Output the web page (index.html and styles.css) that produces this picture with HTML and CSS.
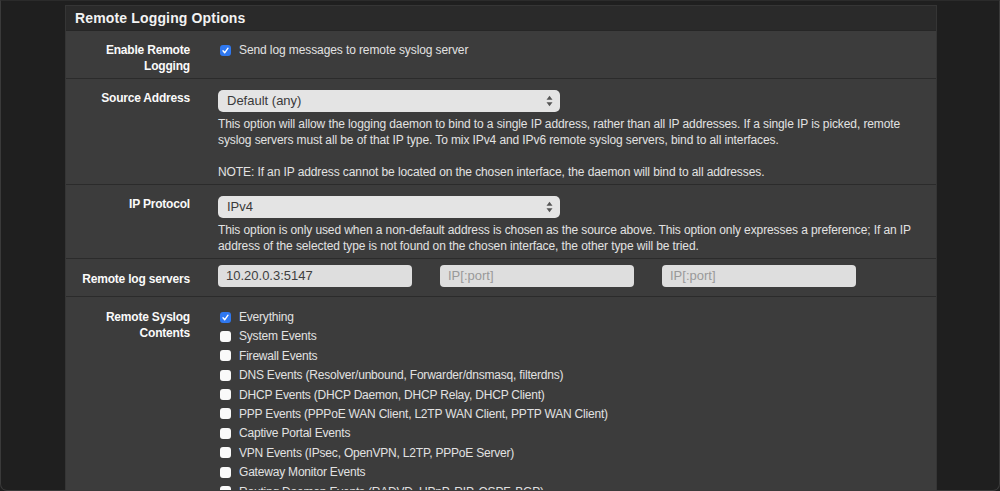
FILE: index.html
```html
<!DOCTYPE html>
<html>
<head>
<meta charset="utf-8">
<link rel="stylesheet" href="styles.css">
</head>
<body>
<div class="window">
  <div class="panel">
    <div class="panel-heading">Remote Logging Options</div>
    <div class="panel-body">
      <div class="row">
        <div class="label">Enable Remote Logging</div>
        <div class="content">
          <div class="check-item"><span class="cb checked"><svg viewBox="0 0 11 11" width="11" height="11"><path d="M3 5.8 L4.7 7.8 L8 3.2" fill="none" stroke="#fff" stroke-width="1.4" stroke-linecap="round" stroke-linejoin="round"/></svg></span><span>Send log messages to remote syslog server</span></div>
        </div>
      </div>
      <div class="row">
        <div class="label">Source Address</div>
        <div class="content">
          <div class="select"><span>Default (any)</span><svg class="arrows" viewBox="0 0 7 12" width="7" height="12"><path d="M0.5 4.8 L3.5 0.8 L6.5 4.8 Z M0.5 7.2 L3.5 11.2 L6.5 7.2 Z" fill="#555"/></svg></div>
          <div class="help">This option will allow the logging daemon to bind to a single IP address, rather than all IP addresses. If a single IP is picked, remote syslog servers must all be of that IP type. To mix IPv4 and IPv6 remote syslog servers, bind to all interfaces.<br><br>NOTE: If an IP address cannot be located on the chosen interface, the daemon will bind to all addresses.</div>
        </div>
      </div>
      <div class="row">
        <div class="label">IP Protocol</div>
        <div class="content">
          <div class="select"><span>IPv4</span><svg class="arrows" viewBox="0 0 7 12" width="7" height="12"><path d="M0.5 4.8 L3.5 0.8 L6.5 4.8 Z M0.5 7.2 L3.5 11.2 L6.5 7.2 Z" fill="#555"/></svg></div>
          <div class="help">This option is only used when a non-default address is chosen as the source above. This option only expresses a preference; If an IP address of the selected type is not found on the chosen interface, the other type will be tried.</div>
        </div>
      </div>
      <div class="row row-servers">
        <div class="label">Remote log servers</div>
        <div class="content inputs">
          <div class="input">10.20.0.3:5147</div>
          <div class="input placeholder">IP[:port]</div>
          <div class="input placeholder">IP[:port]</div>
        </div>
      </div>
      <div class="row row-contents">
        <div class="label">Remote Syslog Contents</div>
        <div class="content list">
          <div class="check-item"><span class="cb checked"><svg viewBox="0 0 11 11" width="11" height="11"><path d="M3 5.8 L4.7 7.8 L8 3.2" fill="none" stroke="#fff" stroke-width="1.4" stroke-linecap="round" stroke-linejoin="round"/></svg></span><span>Everything</span></div>
          <div class="check-item"><span class="cb"></span><span>System Events</span></div>
          <div class="check-item"><span class="cb"></span><span>Firewall Events</span></div>
          <div class="check-item"><span class="cb"></span><span>DNS Events (Resolver/unbound, Forwarder/dnsmasq, filterdns)</span></div>
          <div class="check-item"><span class="cb"></span><span>DHCP Events (DHCP Daemon, DHCP Relay, DHCP Client)</span></div>
          <div class="check-item"><span class="cb"></span><span>PPP Events (PPPoE WAN Client, L2TP WAN Client, PPTP WAN Client)</span></div>
          <div class="check-item"><span class="cb"></span><span>Captive Portal Events</span></div>
          <div class="check-item"><span class="cb"></span><span>VPN Events (IPsec, OpenVPN, L2TP, PPPoE Server)</span></div>
          <div class="check-item"><span class="cb"></span><span>Gateway Monitor Events</span></div>
          <div class="check-item"><span class="cb"></span><span>Routing Daemon Events (RADVD, UPnP, RIP, OSPF, BGP)</span></div>
        </div>
      </div>
    </div>
  </div>
</div>
</body>
</html>
```

FILE: styles.css
```css
html, body {
  margin: 0;
  padding: 0;
  background: #1e1e1e;
}
body {
  font-family: "Liberation Sans", Arial, sans-serif;
  font-size: 12px;
  color: #e2e2e2;
}
.window {
  box-sizing: border-box;
  width: 1000px;
  height: 491px;
  border: 1px solid #3a3a3a;
  border-top-color: #2b2b2b;
  border-radius: 0 0 7px 7px;
  background: #1f1f1f;
  overflow: hidden;
  padding-top: 4px;
}
.panel {
  margin-left: 64px;
  width: 870px;
  border: 1px solid #353535;
  border-bottom: none;
  background: #3c3c3c;
}
.panel-heading {
  box-sizing: border-box;
  height: 25px;
  background: #2a2a2a;
  border-bottom: 1px solid #262626;
  color: #f2f2f2;
  font-size: 14px;
  font-weight: bold;
  letter-spacing: 0.15px;
  padding: 4px 0 0 9px;
  line-height: 17px;
}
.row {
  display: grid;
  grid-template-columns: 124px 1fr;
  column-gap: 28px;
  padding: 11px 0 4px;
  border-bottom: 1px solid #2b2b2b;
}
.label {
  text-align: right;
  font-weight: bold;
  color: #fafafa;
  line-height: 16px;
  padding-left: 10px;
  letter-spacing: -0.2px;
}
.content {
  line-height: 16px;
  letter-spacing: -0.1px;
}
.check-item {
  display: flex;
  align-items: center;
  height: 16px;
  gap: 8px;
  padding-left: 2px;
  white-space: nowrap;
}
.cb {
  box-sizing: border-box;
  width: 11px;
  height: 11px;
  border-radius: 3px;
  background: #fafafa;
  flex: none;
  display: flex;
}
.cb.checked {
  background: #2f78f0;
}
.select {
  box-sizing: border-box;
  width: 342px;
  height: 22px;
  background: #e4e4e4;
  border-radius: 5px;
  display: flex;
  align-items: center;
  justify-content: space-between;
  padding: 0 7px 0 9px;
  color: #3a3a3a;
  font-size: 13px;
  letter-spacing: 0;
}
.help {
  margin-top: 4px;
  padding-right: 20px;
}
.row-servers {
  padding: 6px 0 9px;
}
.row-servers .label {
  padding-top: 6px;
}
.inputs {
  display: flex;
  gap: 28px;
}
.input {
  box-sizing: border-box;
  width: 194px;
  height: 22px;
  background: #dedede;
  border-radius: 4px;
  padding-left: 8px;
  line-height: 22px;
  color: #3f3f3f;
  font-size: 13px;
  letter-spacing: 0;
}
.input.placeholder {
  color: #999;
}
.row-contents {
  padding-top: 12px;
  border-bottom: none;
}
.list {
  letter-spacing: -0.2px;
}
.list .check-item {
  height: 16px;
  margin-bottom: 3.4px;
}
```
